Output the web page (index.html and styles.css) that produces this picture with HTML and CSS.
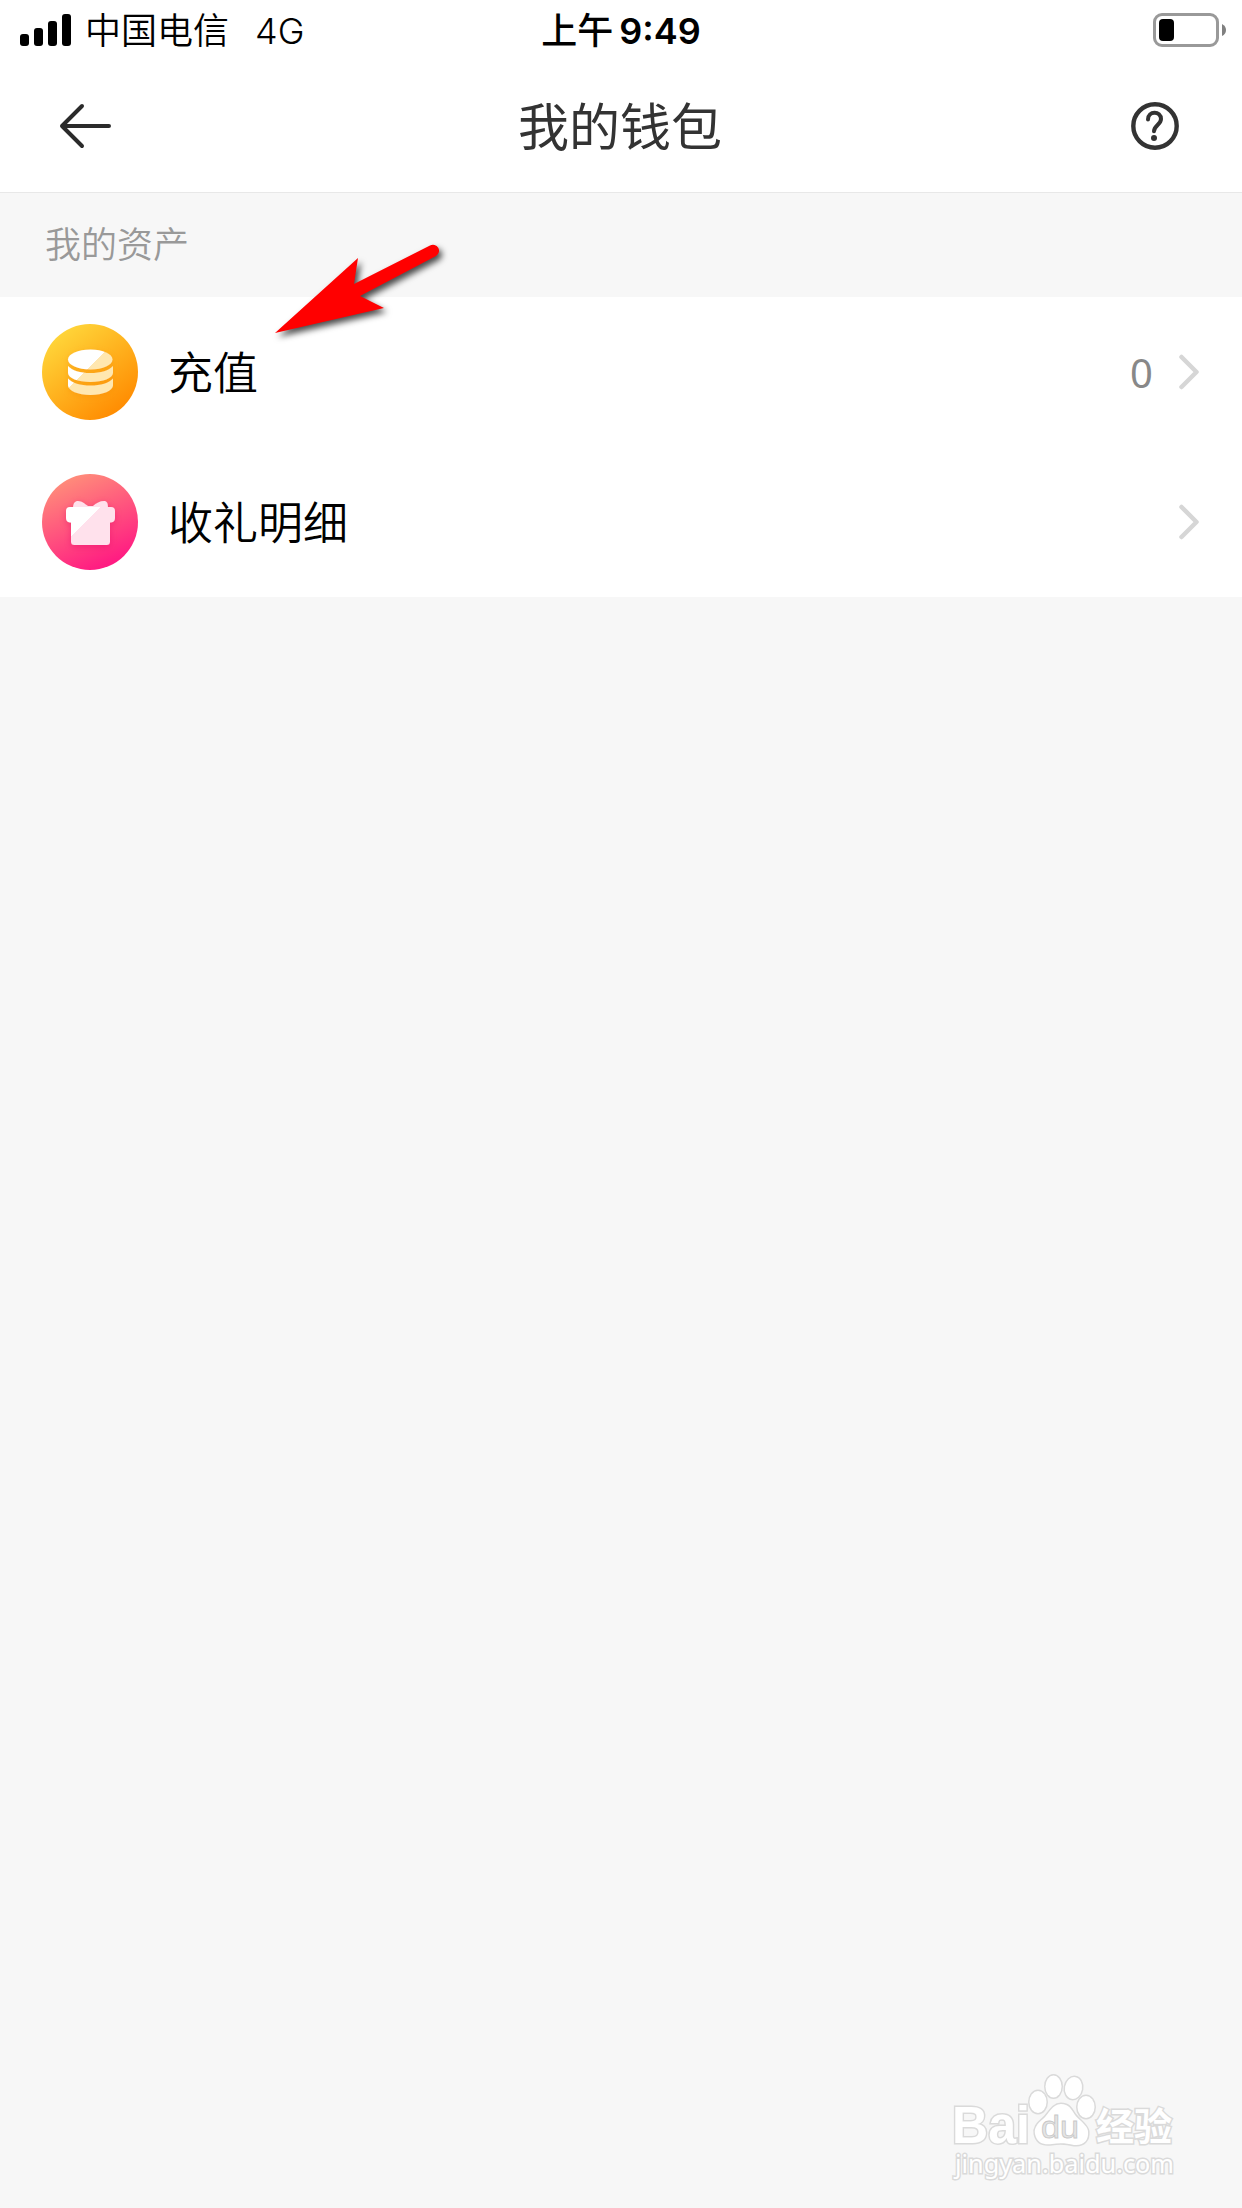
FILE: index.html
```html
<!DOCTYPE html>
<html lang="zh-CN">
<head>
  <meta charset="UTF-8">
  <title>我的钱包</title>
  <link rel="stylesheet" href="styles.css">
</head>
<body>
  <div class="status-bar">
    <div class="carrier">
      <svg class="signal" width="52" height="34" viewBox="0 0 52 34">
        <rect x="0" y="20" width="9" height="12" rx="3"/>
        <rect x="14" y="14" width="9" height="18" rx="3"/>
        <rect x="28" y="7" width="9" height="25" rx="3"/>
        <rect x="42" y="0" width="9" height="32" rx="3"/>
      </svg>
      <span class="carrier-name">中国电信</span>
      <span class="network">4G</span>
    </div>
    <div class="time"><span>上午</span><span class="clock">9:49</span></div>
    <svg class="battery" width="74" height="34" viewBox="0 0 74 34">
      <rect x="1.5" y="1.5" width="63" height="31" rx="7.5" fill="none" stroke="#999" stroke-width="3"/>
      <rect x="6" y="6" width="15" height="22" rx="4"/>
      <path d="M69 11Q73 13 73 17Q73 21 69 23Z" fill="#808080"/>
    </svg>
  </div>

  <div class="nav">
    <svg class="back" width="52" height="46" viewBox="0 0 52 46">
      <path d="M23 3L3 23L23 43M3 23H50" fill="none" stroke="#2b2b2b" stroke-width="4" stroke-linecap="round" stroke-linejoin="round"/>
    </svg>
    <h1>我的钱包</h1>
    <svg class="help" width="48" height="48" viewBox="0 0 48 48">
      <circle cx="24" cy="24" r="21.7" fill="none" stroke="#333" stroke-width="4.4"/>
      <path d="M17 17.500C17 8.500 30 8.500 30 17C30 22.500 23.200 23.500 23 29.200" fill="none" stroke="#333" stroke-width="4" stroke-linecap="round"/>
      <circle cx="23" cy="36" r="3" fill="#333"/>
    </svg>
  </div>

  <div class="section-title">我的资产</div>

  <div class="list">
    <div class="row">
      <svg class="icon" width="96" height="96" viewBox="0 0 96 96">
        <defs>
          <linearGradient id="gold" x1="0.15" y1="0.1" x2="0.8" y2="0.95">
            <stop offset="0" stop-color="#ffd63a"/>
            <stop offset="1" stop-color="#ff8a00"/>
          </linearGradient>
          <linearGradient id="coin" gradientUnits="userSpaceOnUse" x1="42" y1="38" x2="52" y2="48">
            <stop offset="0.5" stop-color="#fff"/>
            <stop offset="0.5" stop-color="#ffe7b0"/>
          </linearGradient>
          <filter id="goldShadow" x="-30%" y="-30%" width="160%" height="160%">
            <feDropShadow dx="0" dy="2" stdDeviation="3" flood-color="#f58a00" flood-opacity="0.4"/>
          </filter>
        </defs>
        <circle cx="48" cy="48" r="48" fill="url(#gold)"/>
        <g filter="url(#goldShadow)">
          <g fill="url(#coin)">
            <path fill="url(#coin)" d="M26 35.500C26 30 36 25.500 48.500 25.500S70.500 30 70.500 35.500S61 45.500 48.500 45.500S26 41 26 35.500Z"/>
            <path d="M26 42C30 46.500 38 49 48.500 49S67 46.500 71 42V49C71 54 61 58 48.500 58S26 54 26 49Z"/>
            <path d="M26 54.500C30 59 38 61.500 48.500 61.500S67 59 71 54.500V61.500C71 66.500 61 71 48.500 71S26 66.500 26 61.500Z"/>
          </g>
        </g>
      </svg>
      <span class="label">充值</span>
      <span class="value">0</span>
      <svg class="chevron" width="20" height="36" viewBox="0 0 20 36">
        <path d="M2.500 3L17.500 18L2.500 33"/>
      </svg>
    </div>
    <div class="row">
      <svg class="icon" width="96" height="96" viewBox="0 0 96 96">
        <defs>
          <linearGradient id="pink" x1="0.25" y1="0.05" x2="0.65" y2="0.95">
            <stop offset="0" stop-color="#ff8c7a"/>
            <stop offset="1" stop-color="#ff1c82"/>
          </linearGradient>
          <linearGradient id="box" gradientUnits="userSpaceOnUse" x1="41" y1="41" x2="51" y2="51">
            <stop offset="0.5" stop-color="#fff"/>
            <stop offset="0.5" stop-color="#ffe1ec"/>
          </linearGradient>
          <filter id="pinkShadow" x="-30%" y="-30%" width="160%" height="160%">
            <feDropShadow dx="0" dy="2" stdDeviation="3.500" flood-color="#e0105f" flood-opacity="0.4"/>
          </filter>
        </defs>
        <circle cx="48" cy="48" r="48" fill="url(#pink)"/>
        <g filter="url(#pinkShadow)">
          <path d="M31 35C31 29 33 27 36 27C40 27 43 30 46 32H51C54 29 58 27 62 27C65 27 66 29 66 34Z" fill="#ffe1ec"/>
          <path d="M28 33H69Q73 33 73 37V44Q73 48 69 48.500H68V67.500Q68 71 64.500 71H32.500Q29 71 29 67.500V48.500H28Q24 48 24 44V37Q24 33 28 33Z" fill="url(#box)"/>
        </g>
      </svg>
      <span class="label">收礼明细</span>
      <svg class="chevron" width="20" height="36" viewBox="0 0 20 36">
        <path d="M2.500 3L17.500 18L2.500 33"/>
      </svg>
    </div>
  </div>

  <svg class="pointer" width="200" height="120" viewBox="0 0 200 120">
    <path d="M15 103L98 28L94 54L170 15.500A6 6 0 0 1 176 26L100 66L124 78Z" fill="#f00"/>
  </svg>

  <svg class="watermark" width="270" height="150" viewBox="0 0 270 150">
    <g class="outlined">
      <text class="brand" x="22" y="93" textLength="78" lengthAdjust="spacingAndGlyphs">Bai</text>
      <ellipse cx="108" cy="52" rx="8.500" ry="11"/>
      <ellipse cx="123.500" cy="36.500" rx="8" ry="11"/>
      <ellipse cx="143.500" cy="38" rx="8.500" ry="11" transform="rotate(10 143.500 38)"/>
      <ellipse cx="156" cy="57" rx="8.500" ry="11"/>
      <path d="M131 54C122 54 119 64 113 69C107 74 104 78 105 84C107 94 115 95 122 94C129 93 136 93 144 95C154 96 159 90 158 81C157 75 150 71 145 65C141 59 139 54 131 54Z"/>
      <text class="cn" x="166" y="90" textLength="76" lengthAdjust="spacingAndGlyphs">经验</text>
      <text class="url" x="25" y="123" textLength="219" lengthAdjust="spacingAndGlyphs">jingyan.baidu.com</text>
    </g>
    <text class="du" x="111" y="88" textLength="38" lengthAdjust="spacingAndGlyphs">du</text>
  </svg>
</body>
</html>
```
FILE: styles.css
```css
* {
  box-sizing: border-box;
}
body {
  margin: 0;
  min-height: 2208px;
  position: relative;
  background-color: #f7f7f7;
  color: #000;
  font-family: Inter, "Noto Sans CJK SC", sans-serif;
}
svg {
  display: block;
  flex-shrink: 0;
}
.status-bar {
  display: grid;
  grid-template-columns: 1fr auto 1fr;
  height: 60px;
  padding: 0 15px 0 20px;
  background: #fff;
  font-size: 36px;
  line-height: 62px;
}
.carrier {
  display: flex;
}
.signal {
  margin-top: 14px;
}
.carrier-name {
  margin-left: 13px;
  font-weight: 350;
}
.network {
  margin-left: 26px;
  font-weight: 350;
}
.time {
  display: flex;
  margin-right: 5px;
  font-weight: 500;
}
.clock {
  margin-left: 6px;
  font-weight: 600;
}
.battery {
  margin-top: 13px;
  justify-self: end;
}
.nav {
  display: flex;
  align-items: center;
  justify-content: space-between;
  height: 133px;
  padding: 0 63px 0 59px;
  background: #fff;
  border-bottom: 1px solid #e8e8e8;
}
.nav h1 {
  margin: 0 2px 4px 0;
  color: #333;
  font-size: 51px;
  font-weight: 400;
}
.section-title {
  height: 104px;
  padding-left: 45px;
  color: #999;
  font-size: 36px;
  font-weight: 350;
  line-height: 104px;
}
.list {
  background: #fff;
}
.row {
  display: flex;
  align-items: center;
  height: 150px;
  padding: 0 43px 0 42px;
}
.label {
  margin-left: 30px;
  margin-right: auto;
  margin-bottom: 3px;
  font-size: 45px;
  font-weight: 350;
}
.value {
  margin-right: 26px;
  color: #888;
  font-family: "Noto Sans", sans-serif;
  font-size: 40px;
}
.chevron {
  margin-bottom: 1px;
}
.chevron path {
  fill: none;
  stroke: #d6d6d6;
  stroke-width: 4.5;
  stroke-linecap: round;
  stroke-linejoin: round;
}
.pointer {
  position: absolute;
  left: 260px;
  top: 230px;
  filter: drop-shadow(3px 4px 3px rgba(0, 0, 0, 0.7));
}
.watermark {
  position: absolute;
  left: 930px;
  top: 2050px;
}
.outlined {
  fill: #fff;
  stroke: #dadada;
  stroke-width: 3px;
  paint-order: stroke;
}
.brand {
  font: bold 51px "Liberation Sans", sans-serif;
}
.cn {
  font: bold 38px "Noto Sans CJK SC", sans-serif;
}
.url {
  font: 26px "Noto Sans", sans-serif;
}
.du {
  fill: #e4e4e4;
  stroke: #c8c8c8;
  stroke-width: 0.8px;
  font: 31px "Liberation Sans", sans-serif;
}
```
